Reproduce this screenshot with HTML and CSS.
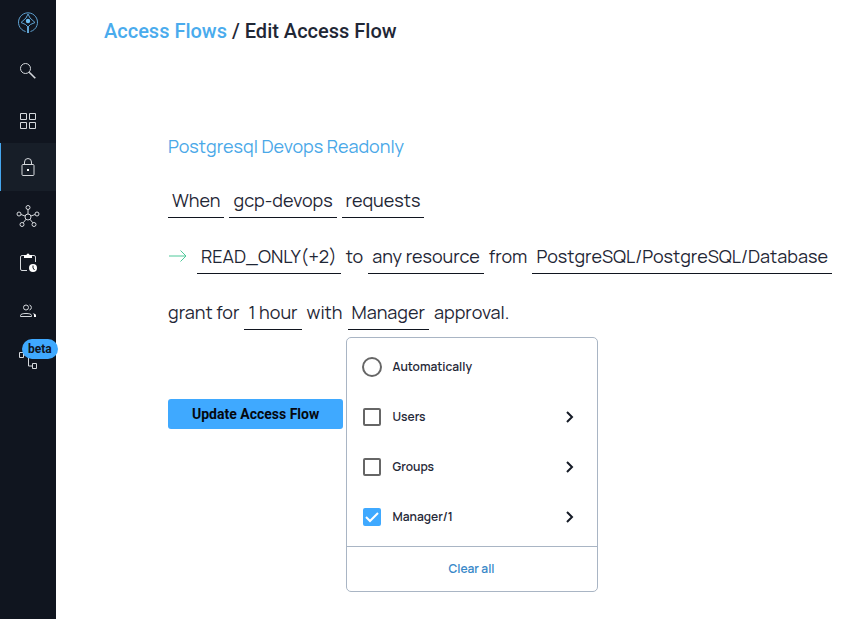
FILE: index.html
```html
<!DOCTYPE html>
<html lang="en">
<head>
<meta charset="utf-8">
<meta name="viewport" content="width=device-width, initial-scale=1">
<title>Edit Access Flow</title>
<link rel="stylesheet" href="styles.css">
</head>
<body>
<nav class="sidebar" aria-label="Main">
    <a class="logo" href="#" aria-label="Home">
        <svg width="22" height="22" viewBox="0 0 22 22" fill="none" stroke="#5fa3d3">
            <path d="M8.5 19.5A9.5 9.5 0 1 1 13.5 19.5"/>
            <path d="M11 2L13 6L18 10.5L13.5 12.5L11 15L8.5 12.5L4 10.5L9 6Z"/>
            <path d="M10.5 14V21M11.500 14V21"/>
            <circle cx="11" cy="9" r="2.2" fill="#6ec0f5" stroke="none"/>
        </svg>
    </a>
    <a class="item" href="#" aria-label="Search">
        <svg width="24" height="24" viewBox="0 0 24 24">
            <circle cx="9.5" cy="9.5" r="5"/>
            <path d="M13.2 13.2L19.3 19.3" stroke-width="1.6"/>
        </svg>
    </a>
    <a class="item" href="#" aria-label="Dashboard">
        <svg width="24" height="24" viewBox="0 0 24 24">
            <path d="M4.5 6.5h6v6h-6z M13.5 6.5h6v6h-6z M4.5 15.5h6v6h-6z M13.5 15.5h6v6h-6z"/>
        </svg>
    </a>
    <a class="item active" href="#" aria-label="Access flows">
        <svg width="24" height="24" viewBox="0 0 24 24">
            <rect x="6" y="9.5" width="12" height="11" rx="1"/>
            <path d="M8.5 9.5V7a3.5 3.5 0 0 1 7 0V9.5"/>
            <rect class="solid" x="11" y="14" width="2" height="2"/>
        </svg>
    </a>
    <a class="item" href="#" aria-label="Integrations">
        <svg width="24" height="24" viewBox="0 0 24 24">
            <circle cx="12" cy="14" r="3"/>
            <circle cx="12" cy="4.5" r="2"/>
            <circle cx="3" cy="11" r="2"/>
            <circle cx="21" cy="11" r="2"/>
            <circle cx="6" cy="21.5" r="2"/>
            <circle cx="18" cy="21.5" r="2"/>
            <path d="M12 6.5V11M5 11.5L9 13M19 11.5L15 13M7.2 19.8L10 16.3M16.8 19.8L14 16.3"/>
        </svg>
    </a>
    <a class="item" href="#" aria-label="Activity">
        <svg width="24" height="24" viewBox="0 0 24 24">
            <path d="M11 19.5H6A1.5 1.5 0 0 1 4.5 18V6A1.5 1.5 0 0 1 6 4.5H18A1.5 1.5 0 0 1 19.5 6V11"/>
            <path class="solid" d="M8 4H10.5A1.5 1.5 0 0 1 13.5 4H16V7H8Z"/>
            <circle class="solid" cx="17" cy="17" r="4"/>
            <path d="M17 14.5V17L18.5 19" stroke="#10151f"/>
        </svg>
    </a>
    <a class="item" href="#" aria-label="Users">
        <svg width="24" height="24" viewBox="0 0 24 24">
            <circle cx="10" cy="8.5" r="2.5"/>
            <path d="M13.5 6A2.6 2.6 0 0 1 13.5 11"/>
            <path d="M4.5 17.5V16.5C4.5 15 7 14.5 10 14.5S15.5 15 15.5 16.5V17.5Z"/>
            <path class="solid" d="M16.5 14C18.5 14.5 20 15 20 16.5V18H18V16.5C18 15.3 17.5 14.8 16.5 14Z"/>
        </svg>
    </a>
    <a class="item" href="#" aria-label="Workflows (beta)">
        <svg width="24" height="24" viewBox="0 0 24 24">
            <path d="M3.5 5.5h4v5h-4z M16.5 16.5h4v5h-4z M8 8H12.5V19H16.5 M12.5 9.5H20.5V5"/>
        </svg>
        <span class="badge">beta</span>
    </a>
</nav>

<main class="page">
    <h1 class="breadcrumb"><a href="#">Access Flows</a> / Edit Access Flow</h1>

    <form class="flow">
        <h2 class="flow-name">Postgresql Devops Readonly</h2>
        <div class="line">
            <button type="button" class="field">When</button>
            <button type="button" class="field">gcp-devops</button>
            <button type="button" class="field">requests</button>
        </div>
        <div class="line">
            <svg class="arrow" width="24" height="16" viewBox="0 0 24 16" fill="none" stroke="#4fc99a">
                <path d="M1 8H18M12.5 2.5L18 8L12.5 13.5"/>
            </svg>
            <button type="button" class="field">READ_ONLY(+2)</button>
            <span>to</span>
            <button type="button" class="field">any resource</button>
            <span>from</span>
            <button type="button" class="field">PostgreSQL/PostgreSQL/Database</button>
        </div>
        <div class="line">
            <span>grant for</span>
            <button type="button" class="field">1 hour</button>
            <span>with</span>
            <div class="approver">
                <button type="button" class="field" aria-expanded="true">Manager</button>
                <div class="menu">
                    <ul class="options">
                        <li>
                            <input type="radio" id="auto" name="auto">
                            <label for="auto">Automatically</label>
                        </li>
                        <li>
                            <input type="checkbox" id="users">
                            <label for="users">Users</label>
                            <button type="button" class="more" aria-label="Show users">
                                <svg width="10" height="14" viewBox="0 0 10 14"><path d="M2 2L7 7L2 12"/></svg>
                            </button>
                        </li>
                        <li>
                            <input type="checkbox" id="groups">
                            <label for="groups">Groups</label>
                            <button type="button" class="more" aria-label="Show groups">
                                <svg width="10" height="14" viewBox="0 0 10 14"><path d="M2 2L7 7L2 12"/></svg>
                            </button>
                        </li>
                        <li>
                            <span class="tick">
                                <input type="checkbox" id="manager" checked>
                                <svg width="18" height="18" viewBox="0 0 18 18"><path d="M3 9L7 13L15 5"/></svg>
                            </span>
                            <label for="manager">Manager/1</label>
                            <button type="button" class="more" aria-label="Show managers">
                                <svg width="10" height="14" viewBox="0 0 10 14"><path d="M2 2L7 7L2 12"/></svg>
                            </button>
                        </li>
                    </ul>
                    <button type="button" class="clear">Clear all</button>
                </div>
            </div>
            <span>approval.</span>
        </div>
        <button type="submit" class="submit">Update Access Flow</button>
    </form>
</main>
</body>
</html>
```
FILE: styles.css
```css
* {box-sizing:border-box;}
body {margin:0;display:flex;min-height:100vh;background:#fff;color:#1f2736;font-family:Manrope,Inter,"Noto Sans",sans-serif;}
button {font:inherit;color:inherit;background:none;border:0;padding:0;cursor:pointer;}

.sidebar {flex:none;width:56px;background:#10151f;}
.sidebar a {display:flex;align-items:center;justify-content:center;}
.logo {height:47px;padding-bottom:2px;}
.item {position:relative;height:48px;}
.item svg {fill:none;stroke:#d5d8dc;}
.item .solid {fill:#fff;stroke:none;}
.item.active {background:#171e28;box-shadow:inset 1px 0 #45a6ee;}
.badge {position:absolute;left:22px;top:4px;padding:0 6px;border-radius:10px;background:#3fa9ff;color:#10151f;font:700 12px/20px Roboto,sans-serif;}

.page {flex:1;min-width:0;padding:16px 32px 32px 48px;}
.breadcrumb {margin:0;font:500 20px/30px Roboto,sans-serif;}
.breadcrumb a {color:#4aabed;text-decoration:none;}

.flow {padding:86px 0 0 64px;font-size:18px;font-weight:400;line-height:32px;}
.flow-name {margin:0 0 24px;font-size:18px;font-weight:400;line-height:28px;color:#4aa8e8;}
.line {display:flex;align-items:flex-start;gap:5px;height:34px;margin-bottom:22px;white-space:nowrap;}
.arrow {flex:none;margin-top:8px;}
.field {height:34px;padding:0 4px 1px;border-bottom:1px solid #10151f;}
.submit {display:block;margin-top:69px;padding:0 24px;border-radius:3px;background:#3fa9ff;color:#05080f;font:700 14px/30px Roboto,sans-serif;}

.approver {position:relative;}
.menu {position:absolute;left:-2px;top:41px;width:252px;border:1px solid #a9b5c4;border-radius:5px;background:#fff;font-size:12px;font-weight:600;line-height:20px;}
.options {margin:0;padding:4px 16px;list-style:none;}
.options li {display:flex;align-items:center;height:50px;}
.options label {flex:1;margin-left:12px;}
.options input {flex:none;appearance:none;width:18px;height:18px;margin:0;border:2px solid #666;border-radius:2px;background:#fff;}
.options input[type=radio] {width:20px;height:20px;margin:0 -1px;border-radius:50%;}
.options input:checked {border-color:#3fa9ff;background:#3fa9ff;}
.tick {position:relative;display:flex;}
.tick svg {position:absolute;left:0;top:0;fill:none;stroke:#fff;stroke-width:2;pointer-events:none;}
.more {display:flex;padding:6px;}
.more svg {fill:none;stroke:#151b26;stroke-width:2;}
.clear {width:100%;height:45px;border-top:1px solid #a9b5c4;color:#3787c8;}
```
